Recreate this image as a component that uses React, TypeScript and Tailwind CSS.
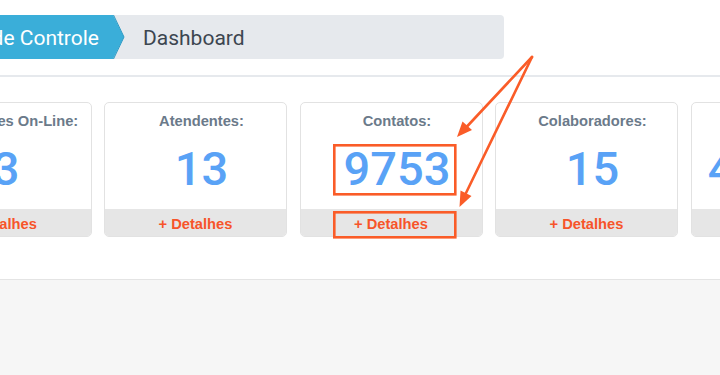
const cards = [
  { label: "Atendentes On-Line:", value: "3" },
  { label: "Atendentes:", value: "13" },
  { label: "Contatos:", value: "9753" },
  { label: "Colaboradores:", value: "15" },
  { label: "Mensagens:", value: "412568" },
];

const Breadcrumb: React.FC = () => {
  return (
    <nav className="ml-[-100px] flex h-[44px] w-[604px] items-stretch rounded-r-[4px] bg-[#e6e9ed]">
      <div className="relative flex w-[213px] items-center justify-end bg-[#3aaed9] pr-[14px] pt-[3px] text-[21px] text-white">
        <span className="whitespace-nowrap">Painel de Controle</span>
        <svg
          className="absolute right-[-12px] top-0"
          width="12"
          height="44"
          viewBox="0 0 12 44"
        >
          <polygon points="0,0 11,22 0,44" fill="#3aaed9" />
          <polyline points="0.5,0 11,22 0.5,44" fill="none" stroke="#2e9ac4" strokeWidth="1" />
        </svg>
      </div>
      <div className="flex items-center pl-[30px] pt-[3px] text-[21px] text-[#3c4650]">Dashboard</div>
    </nav>
  );
};

type CardProps = { label: string; value: string };
const StatCard: React.FC<CardProps> = ({ label, value }) => {
  return (
    <div className="flex h-[135px] w-[183px] shrink-0 flex-col overflow-hidden rounded-[5px] border border-[#e2e2e2] bg-white">
      <div className="flex flex-1 flex-col items-center pl-[12px]">
        <p className="mt-[9px] whitespace-nowrap font-['Liberation_Sans',Arial,sans-serif] text-[14.7px] font-bold leading-[18px] text-[#6b7a8a]">
          {label}
        </p>
        <p className="mt-[11px] font-['Roboto',sans-serif] text-[47px] font-medium leading-[56px] text-[#59a2f6]">
          {value}
        </p>
      </div>
      <div className="flex h-[27px] items-center justify-center bg-[#e6e6e6] pt-[3px] font-['Liberation_Sans',Arial,sans-serif] text-[14.7px] font-bold text-[#f7542a]">
        + Detalhes
      </div>
    </div>
  );
};

const Annotations: React.FC = () => {
  const c = "#fa5c28";
  return (
    <svg className="pointer-events-none absolute inset-0" width="720" height="375" viewBox="0 0 720 375">
      <rect x="334.3" y="145.3" width="121" height="49" fill="none" stroke={c} strokeWidth="2.6" />
      <rect x="334.3" y="212.3" width="121" height="25" fill="none" stroke={c} strokeWidth="2.6" />
      <line x1="532" y1="57" x2="467" y2="126.5" stroke={c} strokeWidth="2.6" strokeLinecap="round" />
      <polygon points="457,137 472,130 462.5,121.5" fill={c} />
      <line x1="532" y1="57" x2="466" y2="193" stroke={c} strokeWidth="2.6" strokeLinecap="round" />
      <polygon points="459.5,207 471.5,196 460.5,190.5" fill={c} />
    </svg>
  );
};

export default function App() {
  return (
    <div className="relative flex h-[375px] w-[720px] flex-col overflow-hidden bg-white font-['Roboto',sans-serif]">
      <header className="pt-[15px]">
        <Breadcrumb />
      </header>
      <div className="mt-[16px] h-[2px] bg-[#e6e9ed]" />
      <section className="ml-[-91.5px] mt-[25px] flex gap-[12.5px]">
        {cards.map((card) => (
          <StatCard key={card.label} label={card.label} value={card.value} />
        ))}
      </section>
      <div className="mt-[42px] flex-1 border-t border-[#e4e4e4] bg-[#f6f6f6]" />
      <Annotations />
    </div>
  );
}
